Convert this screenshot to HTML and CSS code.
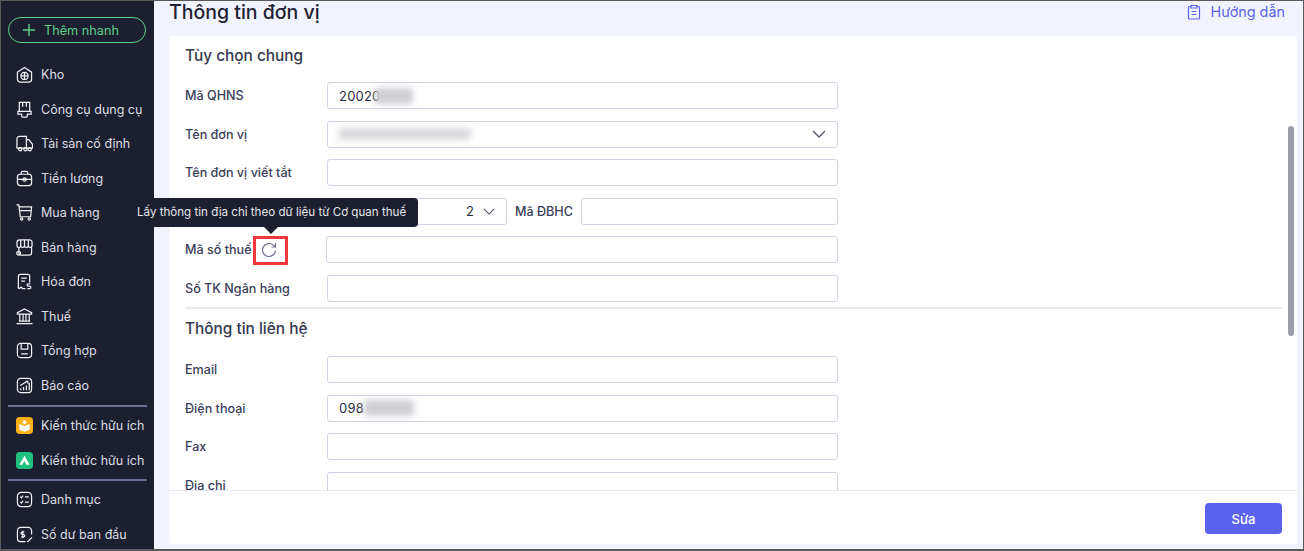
FILE: index.html
```html
<!DOCTYPE html>
<html lang="vi">
<head>
<meta charset="utf-8">
<title>Thông tin đơn vị</title>
<link rel="stylesheet" href="styles.css">
</head>
<body>
<div class="app">
  <aside class="sidebar">
    <button class="quick"><svg width="14" height="14" viewBox="0 0 14 14"><path d="M7 1v12M1 7h12" stroke="#5fd08a" stroke-width="1.4" fill="none"/></svg><span>Thêm nhanh</span></button>
    <nav class="nav main-nav">
      <a class="item"><svg class="ic" viewBox="0 0 18 18"><path d="M1.500 6.500 9 1.500l7.500 5V14a3 3 0 0 1-3 3h-9a3 3 0 0 1-3-3z"/><circle cx="9" cy="10.500" r="3.800"/><path d="M9 6.700v7.600M5.200 10.500h7.600"/></svg>Kho</a>
      <a class="item"><svg class="ic" viewBox="0 0 18 18"><path d="M3.500 1.500h11v9.500h-11zM2 11h14v3h-4v2a1 1 0 0 1-1 1H7a1 1 0 0 1-1-1v-2H2zM7 1.500V6M11 1.500V6"/></svg>Công cụ dụng cụ</a>
      <a class="item"><svg class="ic" viewBox="0 0 18 18"><path d="M1 4a2.500 2.500 0 0 1 2.500-2.500H11V14H1zM11 5h2.500l4 5v4H11z"/><circle cx="4.500" cy="15" r="1.700"/><circle cx="10" cy="15" r="1.700"/><circle cx="14.500" cy="15" r="1.700"/></svg>Tài sản cố định</a>
      <a class="item"><svg class="ic" viewBox="0 0 18 18"><rect x="1.500" y="4.500" width="15" height="12" rx="3"/><path d="M5.500 4.500V3a1.500 1.500 0 0 1 1.500-1.500h4A1.500 1.500 0 0 1 12.500 3v1.500M1.500 10h15"/><circle cx="9" cy="10" r="1.700"/></svg>Tiền lương</a>
      <a class="item"><svg class="ic" viewBox="0 0 18 18"><path d="M.5 1h2.500l1.500 12.500h11l1-10.500H3.500M4 7h12.500"/><circle cx="6" cy="16" r="1.200"/><circle cx="14" cy="16" r="1.200"/></svg>Mua hàng</a>
      <a class="item"><svg class="ic" viewBox="0 0 18 18"><path d="M3 9v5.500A2.500 2.500 0 0 0 5.500 17H14a2.500 2.500 0 0 0 2.500-2.500V9M4 1h10.500a2.500 2.500 0 0 1 2.500 2.500V7a2 2 0 0 1-4 0 2 2 0 0 1-4 0 2 2 0 0 1-4 0 2 2 0 0 1-4 0V4a3 3 0 0 1 3-3zM5 1v6M9 1v6M13 1v6"/><circle cx="2.800" cy="15" r="2"/></svg>Bán hàng</a>
      <a class="item"><svg class="ic" viewBox="0 0 18 18"><path d="M10 16.500H7l-1.500-1.500L3.500 16.500 2.500 16V3.500a2 2 0 0 1 2-2h8a2 2 0 0 1 2 2V10M5.500 5.500h6M5.500 8.500h4"/><path d="M15 11.500h-2a1 1 0 0 0 0 2.500h1.500a1 1 0 0 1 0 2.500H12"/></svg>Hóa đơn</a>
      <a class="item"><svg class="ic" viewBox="0 0 18 18"><path d="M9 1 16.500 5v1.500h-15V5zM3 14h12M.5 16.500h17M4 7v7M7.500 7v7M10.500 7v7M14 7v7"/></svg>Thuế</a>
      <a class="item"><svg class="ic" viewBox="0 0 18 18"><rect x="1.500" y="1.500" width="15" height="15" rx="3.500"/><path d="M5.500 1.500v6h7v-6M5.500 12.500h7"/></svg>Tổng hợp</a>
      <a class="item"><svg class="ic" viewBox="0 0 18 18"><rect x="1.500" y="1.500" width="15" height="15" rx="3.500"/><path d="M5 14v-2M8 14v-3.500M11 14V9M14 14V6M4.500 9 12 4.500M10 4.500h2.500V7"/></svg>Báo cáo</a>
    </nav>
    <div class="divider first"></div>
    <nav class="nav">
      <a class="item"><svg class="app-ic" viewBox="0 0 18 18"><rect width="18" height="18" rx="4" fill="#fbb017"/><path d="M3.500 7.500 9 9.500l5.500-2v6L9 15.500l-5.500-2z" fill="#fff"/><circle cx="9" cy="5.500" r="2" fill="#fff"/></svg>Kiến thức hữu ích</a>
      <a class="item"><svg class="app-ic" viewBox="0 0 18 18"><rect width="18" height="18" rx="4" fill="#1fbf80"/><path d="M9 4 14.500 13.500H11L9 9.500 6.500 13.500H3.500z" fill="#fff"/></svg>Kiến thức hữu ích</a>
    </nav>
    <div class="divider second"></div>
    <nav class="nav">
      <a class="item"><svg class="ic" viewBox="0 0 18 18"><rect x="1.500" y="1.500" width="15" height="15" rx="4"/><path d="M4.500 6l1.200 1.200L7.500 5M4.500 11.500l1.200 1.200 1.800-2.200M9.500 6.200H13.500M9.500 11.700H13.500"/></svg>Danh mục</a>
      <a class="item"><svg class="ic" viewBox="0 0 18 18"><path d="M16.500 9V5a3.500 3.500 0 0 0-3.500-3.500H5A3.500 3.500 0 0 0 1.500 5v8A3.500 3.500 0 0 0 5 16.500h5M12 17l5-5M8.800 6.500H6.500a1 1 0 0 0 0 2.500h1.500a1 1 0 0 1 0 2.500H5.500M7.200 5v8"/></svg>Số dư ban đầu</a>
    </nav>
  </aside>

  <main class="content">
    <header class="page-head">
      <h1>Thông tin đơn vị</h1>
      <a class="guide"><svg width="14" height="16" viewBox="0 0 14 16"><path d="M4 2.500H2.500a1 1 0 0 0-1 1V14a1 1 0 0 0 1 1h9a1 1 0 0 0 1-1V3.500a1 1 0 0 0-1-1H10M4 1.500h6v2.500H4zM4.500 7.500h5M4.500 10.500h5" fill="none" stroke="#5b63ee" stroke-width="1.200"/></svg>Hướng dẫn</a>
    </header>
    <section class="card">
      <div class="card-body">
        <h2 class="section-title">Tùy chọn chung</h2>
        <div class="rows">
          <div class="row"><label>Mã QHNS</label><div class="field"><span class="val">20020</span><i class="blur short"></i></div></div>
          <div class="row"><label>Tên đơn vị</label><div class="field select"><i class="blur long"></i><svg class="chev" width="14" height="8" viewBox="0 0 14 8"><path d="M1 1l6 6 6-6"/></svg></div></div>
          <div class="row"><label>Tên đơn vị viết tắt</label><div class="field"></div></div>
          <div class="row"><label></label><div class="field select small"><span class="val right">2</span><svg class="chev" width="12" height="7" viewBox="0 0 14 8"><path d="M1 1l6 6 6-6"/></svg></div><label class="inline">Mã ĐBHC</label><div class="field grow"></div></div>
          <div class="row"><label class="with-icon">Mã số thuế<span class="refresh"><svg width="16" height="16" viewBox="0 0 16 16"><path d="M14.500 8.500A6.500 6.500 0 1 1 12.300 3.100L14.500 5" fill="none" stroke="#6b7090" stroke-width="1.200"/><path d="M14.500 1v4h-4" fill="none" stroke="#6b7090" stroke-width="1.200"/></svg></span></label><div class="field shifted"></div></div>
          <div class="row"><label>Số TK Ngân hàng</label><div class="field"></div></div>
        </div>
        <hr class="rule">
        <h2 class="section-title second-title">Thông tin liên hệ</h2>
        <div class="rows contact-rows">
          <div class="row"><label>Email</label><div class="field"></div></div>
          <div class="row"><label>Điện thoại</label><div class="field"><span class="val">098</span><i class="blur phone"></i></div></div>
          <div class="row"><label>Fax</label><div class="field"></div></div>
          <div class="row"><label>Địa chỉ</label><div class="field"></div></div>
        </div>
      </div>
      <footer class="card-foot"><button class="btn">Sửa</button></footer>
    </section>
  </main>
</div>
<div class="scroll-thumb"></div>
<div class="tooltip">Lấy thông tin địa chỉ theo dữ liệu từ Cơ quan thuế</div>
<div class="highlight"></div>
</body>
</html>
```
FILE: styles.css
```css
* { box-sizing: border-box; }
html, body { margin: 0; height: 100%; overflow: hidden; }
body { font-family: Inter, "Noto Sans", sans-serif; background: #f1f4fe; position: relative; }
.app { display: flex; height: 551px; border: 1px solid #5a5a5a; border-width: 1px 1px 2px 1px; }

.sidebar { width: 153px; flex: none; background: #1c1f30; color: #dcdde4; display: flex; flex-direction: column; padding: 16px 7px 0; overflow: hidden; }
.quick { width: 138px; height: 26px; flex: none; margin: 0; border: 1.500px solid #5fd08a; border-radius: 13px; background: transparent; color: #5fd08a; font: 12.700px Inter, sans-serif; display: flex; align-items: center; gap: 8px; padding: 0 0 0 13px; }
.nav { display: flex; flex-direction: column; }
.main-nav { margin-top: 14.500px; }
.item { height: 34.500px; flex: none; display: flex; align-items: center; gap: 8px; padding-left: 8px; font-size: 12.500px; white-space: nowrap; }
.ic { width: 17px; height: 17px; flex: none; fill: none; stroke: #f2f2f6; stroke-width: 1.300; }
.app-ic { width: 17px; height: 17px; flex: none; }
.divider { height: 2px; flex: none; background: #6f6f98; }
.divider.first { margin: 2px 0 2px; }
.divider.second { margin: 1px 0 2px; }

.content { flex: 1; min-width: 0; display: flex; flex-direction: column; padding: 0 6px 5px 15px; }
.page-head { height: 35px; flex: none; display: flex; justify-content: space-between; align-items: flex-start; }
h1 { margin: 0; font-size: 19.500px; font-weight: 500; line-height: 22px; color: #1f2233; }
.guide { display: flex; align-items: center; gap: 10px; color: #5b63ee; font-size: 14.400px; line-height: 22px; padding-right: 12px; }
.card { flex: 1; min-height: 0; background: #fff; border-radius: 4px; display: flex; flex-direction: column; }
.card-body { flex: 1; min-height: 0; overflow: hidden; padding: 10px 15px 0 16px; }
.section-title { margin: 0; font-size: 15.400px; font-weight: 500; line-height: 20px; color: #33384f; }
.second-title { margin-top: 10px; }
.rows { display: flex; flex-direction: column; gap: 11.500px; margin-top: 16px; width: 653px; }
.contact-rows { margin-top: 17px; }
.row { display: flex; align-items: center; height: 27px; flex: none; }
label { width: 142px; flex: none; font-size: 12.600px; font-weight: 500; color: #3b405a; white-space: nowrap; }
label.inline { width: auto; margin: 0 8px; }
label.with-icon { width: 141px; display: flex; align-items: center; }
.refresh { display: inline-flex; margin-left: 9px; }
.field { flex: 1; height: 27px; border: 1px solid #cfd2e2; border-radius: 3px; background: #fff; display: flex; align-items: center; padding: 0 11px; position: relative; min-width: 0; }
.field.small { flex: none; width: 180px; justify-content: flex-end; gap: 9px; }
.field.grow { flex: 1; }
.val { font-size: 13px; letter-spacing: .2px; color: #2a2d40; }
.right { letter-spacing: 0; }
.select { justify-content: space-between; }
.chev { fill: none; stroke: #4c5068; stroke-width: 1.300; flex: none; }
.blur { display: block; height: 16px; background: #cfcfd4; filter: blur(3px); flex: none; }
.short { width: 38px; margin-left: -5px; }
.long { width: 132px; height: 12px; background: #dadade; }
.phone { width: 50px; }
.rule { margin: 5.500px 0 0; border: 0; border-top: 2px solid #e9e9ef; }
.card-foot { height: 54px; flex: none; border-top: 1px solid #e6e6ec; display: flex; justify-content: flex-end; align-items: center; padding: 2px 15px 0 0; }
.btn { width: 77px; height: 31px; border: 0; border-radius: 4px; background: #5b63ee; color: #fff; font: 500 13px Inter, sans-serif; }

.scroll-thumb { position: absolute; left: 1288px; top: 126px; width: 6px; height: 210px; border-radius: 3px; background: #9b9da8; }
.tooltip { position: absolute; left: 125px; top: 198px; width: 293px; height: 29px; background: #1c1f30; border-radius: 4px; color: #e4e4ea; font-size: 11.600px; line-height: 29px; padding-left: 12px; white-space: nowrap; }
.tooltip::after { content: ""; position: absolute; left: 139px; top: 29px; border: 7px solid transparent; border-top-color: #1c1f30; border-bottom: 0; }
.highlight { position: absolute; left: 253px; top: 236px; width: 35px; height: 29px; border: 3px solid #f0373c; }
```
